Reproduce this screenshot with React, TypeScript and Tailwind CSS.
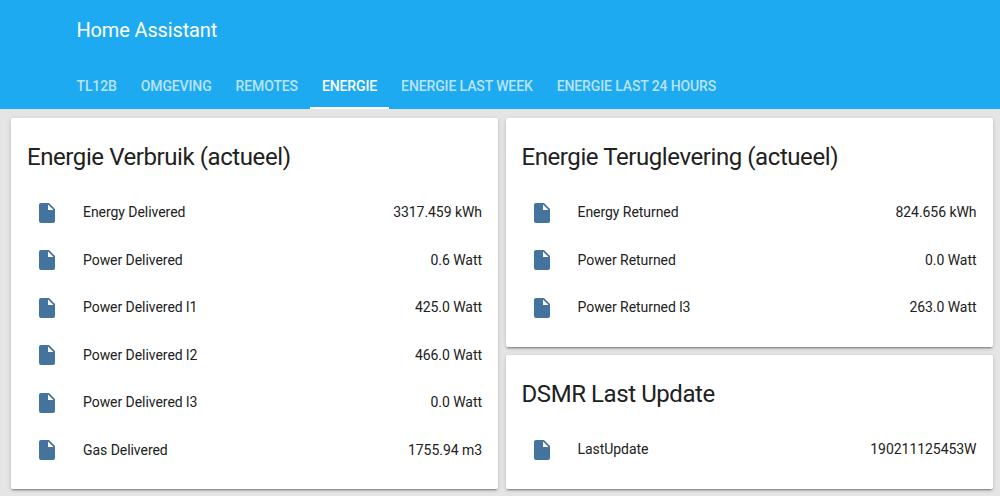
import React from 'react';

const tabs = ['TL12B', 'OMGEVING', 'REMOTES', 'ENERGIE', 'ENERGIE LAST WEEK', 'ENERGIE LAST 24 HOURS'];

const FileIcon = () => (
  <svg viewBox="0 0 24 24" className="w-6 h-6 fill-[#44739e]">
    <path d="M13 9V3.5L18.5 9M6 2C4.89 2 4 2.89 4 4V20A2 2 0 0 0 6 22H18A2 2 0 0 0 20 20V8L14 2H6Z" />
  </svg>
);

const Row = ({ label, value }: { label: string; value: string }) => (
  <div className="flex items-center h-[47.5px]">
    <div className="w-10 flex justify-center"><FileIcon /></div>
    <div className="ml-4 flex-1 text-[14px] tracking-[-0.05px] text-[#212121]">{label}</div>
    <div className="text-[14px] tracking-[-0.05px] text-[#212121]">{value}</div>
  </div>
);

const Card = ({ title, rows }: { title: string; rows: [string, string][] }) => (
  <div className="bg-white rounded-[2px] shadow-[0_2px_2px_0_rgba(0,0,0,0.14),0_1px_5px_0_rgba(0,0,0,0.12),0_3px_1px_-2px_rgba(0,0,0,0.2)] px-4 pb-[15px]">
    <div className="h-[71px] flex items-center text-[24px] tracking-[-0.42px] text-[#212121] pt-[6px]">{title}</div>
    {rows.map(([label, value]) => <Row key={label} label={label} value={value} />)}
  </div>
);

export default function App() {
  return (
    <div className="w-[1000px] h-[496px] overflow-hidden bg-[#e5e5e5] font-['Roboto',sans-serif]">
      <div className="h-[109px] bg-[#1eaaf1] text-white pl-[64.5px] flex flex-col">
        <div className="h-[60px] pl-3 flex items-center text-[20px] tracking-[-0.15px]">Home Assistant</div>
        <div className="flex mt-auto h-[48px]">
          {tabs.map(t => (
            <div
              key={t}
              className={t === 'ENERGIE'
                ? 'px-3 flex items-center text-[14px] tracking-[-0.12px] font-medium border-b-2 border-white pt-[4px] text-white'
                : 'px-3 flex items-center text-[14px] tracking-[-0.12px] font-medium pt-[4px] pb-[2px] text-white/70'}
            >
              {t}
            </div>
          ))}
        </div>
      </div>
      <div className="flex gap-[7.5px] pl-[11px] pr-[7.5px] pt-[9px]">
        <div className="flex-1">
          <Card
            title="Energie Verbruik (actueel)"
            rows={[
              ['Energy Delivered', '3317.459 kWh'],
              ['Power Delivered', '0.6 Watt'],
              ['Power Delivered l1', '425.0 Watt'],
              ['Power Delivered l2', '466.0 Watt'],
              ['Power Delivered l3', '0.0 Watt'],
              ['Gas Delivered', '1755.94 m3'],
            ]}
          />
        </div>
        <div className="flex-1 flex flex-col gap-[8.5px]">
          <Card
            title="Energie Teruglevering (actueel)"
            rows={[
              ['Energy Returned', '824.656 kWh'],
              ['Power Returned', '0.0 Watt'],
              ['Power Returned l3', '263.0 Watt'],
            ]}
          />
          <Card title="DSMR Last Update" rows={[['LastUpdate', '190211125453W']]} />
        </div>
      </div>
    </div>
  );
}
